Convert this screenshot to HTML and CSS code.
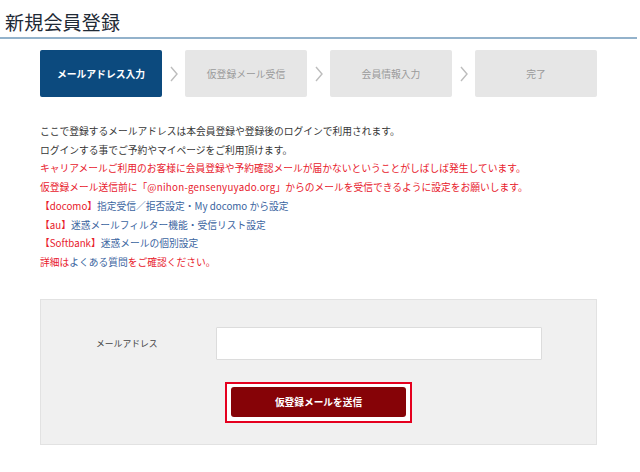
FILE: index.html
```html
<!DOCTYPE html>
<html lang="ja">
<head>
<meta charset="utf-8">
<title>新規会員登録</title>
<link rel="stylesheet" href="styles.css">
</head>
<body>
<header class="page-head">
  <h1 class="page-title">新規会員登録</h1>
</header>

<ol class="steps">
  <li class="step step-current">メールアドレス入力</li>
  <li class="step-arrow"><svg width="8" height="16" viewBox="0 0 8 16"><polyline points="1,1 7,8 1,15" fill="none" stroke="#bdbdbd" stroke-width="1.4"/></svg></li>
  <li class="step">仮登録メール受信</li>
  <li class="step-arrow"><svg width="8" height="16" viewBox="0 0 8 16"><polyline points="1,1 7,8 1,15" fill="none" stroke="#bdbdbd" stroke-width="1.4"/></svg></li>
  <li class="step">会員情報入力</li>
  <li class="step-arrow"><svg width="8" height="16" viewBox="0 0 8 16"><polyline points="1,1 7,8 1,15" fill="none" stroke="#bdbdbd" stroke-width="1.4"/></svg></li>
  <li class="step">完了</li>
</ol>

<div class="notes">
  <p class="line">ここで登録するメールアドレスは本会員登録や登録後のログインで利用されます。</p>
  <p class="line">ログインする事でご予約やマイページをご利用頂けます。</p>
  <p class="line red">キャリアメールご利用のお客様に会員登録や予約確認メールが届かないということがしばしば発生しています。</p>
  <p class="line red">仮登録メール送信前に「<span class="latin">@nihon-gensenyuyado.org</span>」からのメールを受信できるように設定をお願いします。</p>
  <p class="line"><span class="red">【docomo】</span><a class="link" href="#">指定受信／拒否設定・My docomo から設定</a></p>
  <p class="line"><span class="red">【au】</span><a class="link" href="#">迷惑メールフィルター機能・受信リスト設定</a></p>
  <p class="line"><span class="red">【Softbank】</span><a class="link" href="#">迷惑メールの個別設定</a></p>
  <p class="line red">詳細は<a class="link" href="#">よくある質問</a>をご確認ください。</p>
</div>

<form class="panel">
  <div class="field-row">
    <label class="field-label" for="mail">メールアドレス</label>
    <input class="field-input" id="mail" type="email">
  </div>
  <div class="submit-row">
    <div class="submit-frame">
      <button class="submit-btn" type="button">仮登録メールを送信</button>
    </div>
  </div>
</form>
</body>
</html>
```

FILE: styles.css
```css
html, body {
  margin: 0;
  padding: 0;
  background: #ffffff;
}

body {
  font-family: "Noto Sans CJK JP", "Noto Sans", sans-serif;
  color: #333333;
}

.page-head {
  width: 637px;
  border-bottom: 2px solid #93b2cb;
}

.page-title {
  margin: 0;
  padding: 9px 0 2px 5px;
  font-size: 19px;
  line-height: 26px;
  font-weight: 400;
  letter-spacing: 0.2px;
  color: #1f2a36;
}

.steps {
  list-style: none;
  margin: 11px 0 0 0;
  padding: 0 0 0 40px;
  display: flex;
  align-items: center;
}

.step {
  width: 122px;
  height: 47px;
  border-radius: 2px;
  background: #e6e6e6;
  color: #9a9a9a;
  font-size: 9.8px;
  display: flex;
  align-items: center;
  justify-content: center;
}

.step-current {
  background: #0c4a7e;
  color: #ffffff;
  font-weight: 700;
}

.step-arrow {
  width: 23px;
  height: 47px;
  display: flex;
  align-items: center;
  justify-content: center;
}

.step-arrow svg {
  display: block;
  margin-top: 1px;
}

.notes {
  margin: 25px 0 0 0;
  padding-left: 40px;
}

.line {
  margin: 0;
  font-size: 9.75px;
  line-height: 18.7px;
  white-space: nowrap;
  color: #363636;
}

.latin {
  letter-spacing: 0.25px;
}

.red {
  color: #e8202c;
}

.link {
  color: #3a64a0;
  text-decoration: none;
}

.panel {
  box-sizing: border-box;
  width: 557px;
  height: 146px;
  margin: 27px 0 0 40px;
  padding: 27px 0 0 0;
  background: #f0f0f0;
  border: 1px solid #e2e2e2;
}

.field-row {
  display: flex;
  align-items: center;
}

.field-label {
  box-sizing: border-box;
  width: 175px;
  padding-left: 55px;
  font-size: 8.8px;
  color: #444444;
}

.field-input {
  box-sizing: border-box;
  width: 326px;
  height: 33px;
  margin: 0;
  border: 1px solid #dcdcdc;
  border-radius: 1px;
  background: #ffffff;
  outline: none;
}

.submit-row {
  display: flex;
  justify-content: center;
  margin-top: 22px;
}

.submit-frame {
  border: 2px solid #e5001f;
  padding: 3px 4px 4px 4px;
  background: #ffffff;
}

.submit-btn {
  display: block;
  width: 175px;
  height: 30px;
  margin: 0;
  border: 0;
  border-radius: 3px;
  background: #860307;
  color: #ffffff;
  font-family: "Noto Sans CJK JP", sans-serif;
  font-size: 9.7px;
  font-weight: 700;
}
```
